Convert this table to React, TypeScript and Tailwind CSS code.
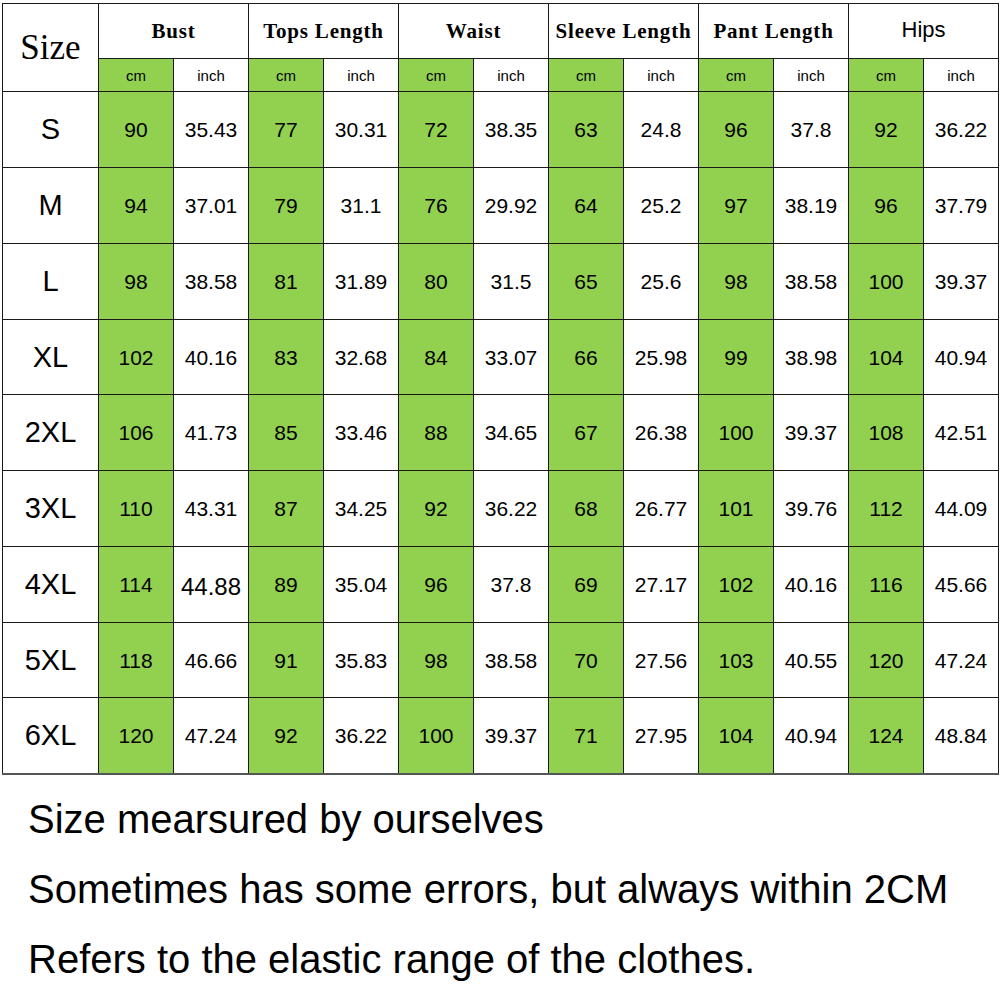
import React from "react";

const heads = ["Bust", "Tops Length", "Waist", "Sleeve Length", "Pant Length"];

const rows: [string, string[]][] = [
  ["S", ["90", "35.43", "77", "30.31", "72", "38.35", "63", "24.8", "96", "37.8", "92", "36.22"]],
  ["M", ["94", "37.01", "79", "31.1", "76", "29.92", "64", "25.2", "97", "38.19", "96", "37.79"]],
  ["L", ["98", "38.58", "81", "31.89", "80", "31.5", "65", "25.6", "98", "38.58", "100", "39.37"]],
  ["XL", ["102", "40.16", "83", "32.68", "84", "33.07", "66", "25.98", "99", "38.98", "104", "40.94"]],
  ["2XL", ["106", "41.73", "85", "33.46", "88", "34.65", "67", "26.38", "100", "39.37", "108", "42.51"]],
  ["3XL", ["110", "43.31", "87", "34.25", "92", "36.22", "68", "26.77", "101", "39.76", "112", "44.09"]],
  ["4XL", ["114", "44.88", "89", "35.04", "96", "37.8", "69", "27.17", "102", "40.16", "116", "45.66"]],
  ["5XL", ["118", "46.66", "91", "35.83", "98", "38.58", "70", "27.56", "103", "40.55", "120", "47.24"]],
  ["6XL", ["120", "47.24", "92", "36.22", "100", "39.37", "71", "27.95", "104", "40.94", "124", "48.84"]],
];

const rowH = ["h-[76px]", "h-[76px]", "h-[76px]", "h-[75px]", "h-[76px]", "h-[76px]", "h-[76px]", "h-[75px]", "h-[76px]"];

export default function App() {
  return (
    <div className="w-[1000px] h-[1000px] bg-white pl-[2px] pt-[3px] text-black">
      <table className="border-collapse table-fixed w-[996px] border-b-2 border-b-[#555]">
        <colgroup>
          <col className="w-[96px]" />
          {Array.from({ length: 12 }).map((_, i) => (
            <col key={i} className="w-[75px]" />
          ))}
        </colgroup>
        <thead>
          <tr className="h-[55px]">
            <th
              rowSpan={2}
              className="border border-[#1a1a1a] font-normal text-[35px] leading-none"
              style={{ fontFamily: '"Liberation Serif", serif' }}
            >
              Size
            </th>
            {heads.map((h) => (
              <th
                key={h}
                colSpan={2}
                className="border border-[#1a1a1a] text-[21px] font-bold tracking-[0.8px] whitespace-nowrap leading-none"
                style={{ fontFamily: '"Liberation Serif", serif' }}
              >
                {h}
              </th>
            ))}
            <th
              colSpan={2}
              className="border border-[#1a1a1a] font-normal text-[22px] leading-none pb-[3px]"
              style={{ fontFamily: '"Liberation Sans", sans-serif' }}
            >
              Hips
            </th>
          </tr>
          <tr className="h-[33px]">
            {Array.from({ length: 12 }).map((_, i) => (
              <th
                key={i}
                className={
                  "border border-[#1a1a1a] font-normal text-[15px] leading-none " +
                  (i % 2 === 0 ? "bg-[#92d050]" : "bg-white")
                }
                style={{ fontFamily: '"Liberation Sans", sans-serif' }}
              >
                {i % 2 === 0 ? "cm" : "inch"}
              </th>
            ))}
          </tr>
        </thead>
        <tbody style={{ fontFamily: '"Liberation Sans", sans-serif' }}>
          {rows.map(([size, vals], r) => (
            <tr key={size} className={rowH[r]}>
              <td className="border border-[#1a1a1a] text-center text-[29px] leading-none">{size}</td>
              {vals.map((v, i) => (
                <td
                  key={i}
                  className={
                    "border border-[#1a1a1a] text-center leading-none " +
                    (i % 2 === 0 ? "bg-[#92d050] text-[21px]" : "bg-white text-[21px]") +
                    (r === 6 && i === 1 ? " !text-[24px] pt-[4px]" : "")
                  }
                >
                  {v}
                </td>
              ))}
            </tr>
          ))}
        </tbody>
      </table>
      <div
        className="mt-[9px] pl-[26px] text-[40px] leading-[70px] text-black"
        style={{ fontFamily: '"Liberation Sans", Arial, sans-serif' }}
      >
        <div>Size mearsured by ourselves</div>
        <div>Sometimes has some errors, but always within 2CM</div>
        <div>Refers to the elastic range of the clothes.</div>
      </div>
    </div>
  );
}
